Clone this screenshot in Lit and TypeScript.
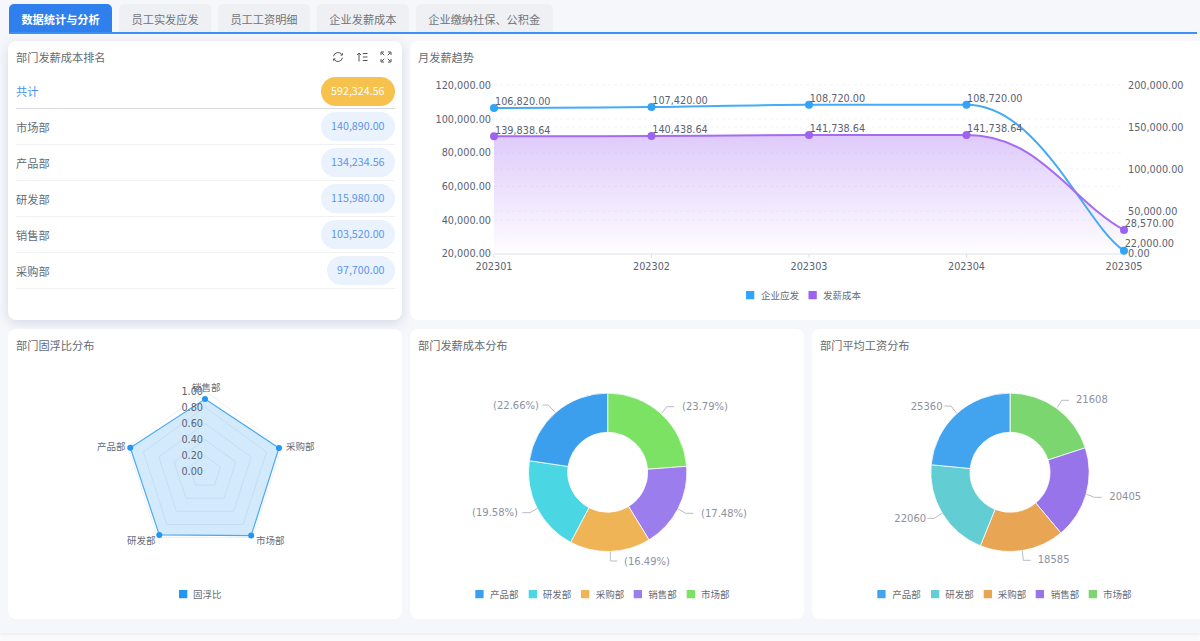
import { LitElement, html, css, svg } from "lit";
import { customElement } from "lit/decorators.js";

type Pt = [number, number];
interface Slice { value: number; color: string; label: string; line: Pt[]; tx: number; ty: number; anchor?: string; }
interface LegendItem { name: string; color: string; sx: number; tx: number; }

const arc = (cx: number, cy: number, r0: number, r1: number, a0: number, a1: number) => {
  const p = (r: number, a: number) => `${(cx + r * Math.sin(a)).toFixed(2)} ${(cy - r * Math.cos(a)).toFixed(2)}`;
  const large = a1 - a0 > Math.PI ? 1 : 0;
  return `M${p(r1, a0)}A${r1} ${r1} 0 ${large} 1 ${p(r1, a1)}L${p(r0, a1)}A${r0} ${r0} 0 ${large} 0 ${p(r0, a0)}Z`;
};

const legend = (items: LegendItem[], y: number) =>
  items.map(
    (i) => svg`<rect x=${i.sx} y=${y - 4} width="8.3" height="8.3" rx="0.5" fill=${i.color}></rect>
      <text class="cjk" x=${i.tx} y=${y}>${i.name}</text>`
  );

const donut = (cx: number, cy: number, slices: Slice[]) => {
  const total = slices.reduce((s, d) => s + d.value, 0);
  let a = 0;
  return slices.map((d) => {
    const next = a + (d.value / total) * Math.PI * 2;
    const path = arc(cx, cy, 40, 79.2, a, next);
    a = next;
    return svg`<path d=${path} fill=${d.color} stroke="#fff" stroke-width="0.8"></path>
      <polyline points=${d.line.map((p) => p.join(",")).join(" ")} fill="none" stroke="#b9bcc6" stroke-width="1"></polyline>
      <text class="pie" x=${d.tx} y=${d.ty}>${d.label}</text>`;
  });
};

const pieA: Slice[] = [
  { value: 23.79, color: "#7be264", label: "(23.79%)", line: [[661.7, 413.3], [666.7, 406.7], [674.3, 406.7]], tx: 682, ty: 406.7 },
  { value: 17.48, color: "#9b7ded", label: "(17.48%)", line: [[678.3, 509], [685.7, 513.3], [693.3, 513.3]], tx: 701, ty: 513.3 },
  { value: 16.49, color: "#eeb455", label: "(16.49%)", line: [[610.3, 551.7], [610.3, 561], [617.3, 561]], tx: 624, ty: 561 },
  { value: 19.58, color: "#4ad6e2", label: "(19.58%)", line: [[537.3, 508.3], [530, 512.7], [522.3, 512.7]], tx: 472, ty: 512.7 },
  { value: 22.66, color: "#3c9fee", label: "(22.66%)", line: [[555, 412.3], [548.3, 405], [542.7, 405]], tx: 493, ty: 405 },
];
const pieB: Slice[] = [
  { value: 21608, color: "#7cd670", label: "21608", line: [[1057.3, 407.7], [1061.7, 400.3], [1069, 400.3]], tx: 1076, ty: 399.7 },
  { value: 20405, color: "#9774ea", label: "20405", line: [[1086.7, 494.3], [1094.3, 497.3], [1101.7, 497.3]], tx: 1109.3, ty: 496 },
  { value: 18585, color: "#e8a553", label: "18585", line: [[1022.3, 551], [1023.3, 560.3], [1030.7, 560.3]], tx: 1037.7, ty: 559.3 },
  { value: 22060, color: "#62cdd2", label: "22060", line: [[941.7, 513.3], [934.3, 518.3], [927.3, 518.3]], tx: 894.3, ty: 518 },
  { value: 25360, color: "#42a3ef", label: "25360", line: [[956.7, 413.3], [951, 406], [944.3, 406]], tx: 910.7, ty: 406 },
];

const legendA: LegendItem[] = [
  { name: "产品部", color: "#3c9fee", sx: 475.3, tx: 490 },
  { name: "研发部", color: "#4ad6e2", sx: 528.7, tx: 542.7 },
  { name: "采购部", color: "#eeb455", sx: 581, tx: 595.7 },
  { name: "销售部", color: "#9b7ded", sx: 633.7, tx: 648.3 },
  { name: "市场部", color: "#7be264", sx: 686.7, tx: 701 },
];
const legendB: LegendItem[] = [
  { name: "产品部", color: "#42a3ef", sx: 877.3, tx: 892.3 },
  { name: "研发部", color: "#62cdd2", sx: 931, tx: 945.3 },
  { name: "采购部", color: "#e8a553", sx: 983.7, tx: 997.7 },
  { name: "销售部", color: "#9774ea", sx: 1035.7, tx: 1050.7 },
  { name: "市场部", color: "#7cd670", sx: 1088.7, tx: 1103 },
];

const rows = [
  ["市场部", "140,890.00"],
  ["产品部", "134,234.56"],
  ["研发部", "115,980.00"],
  ["销售部", "103,520.00"],
  ["采购部", "97,700.00"],
];
const tabs = ["员工实发应发", "员工工资明细", "企业发薪成本", "企业缴纳社保、公积金"];

const xs = [494, 651.5, 809, 966.5, 1124];
const blue: Pt[] = [[494, 108], [651.5, 107], [809, 104.8], [966.5, 104.8], [1124, 250.7]];
const purple: Pt[] = [[494, 136.3], [651.5, 136], [809, 135], [966.5, 135], [1124, 230]];
const blueLine = "M494 108C546 108 599 107.5 651.5 107C704 106.5 756 104.8 809 104.8C861 104.8 914 104.8 966.5 104.8C1040 104.8 1085 225 1124 250.7";
const purpleLine = "M494 136.3C546 136.3 599 136.2 651.5 136C704 135.8 756 135 809 135C861 135 914 135 966.5 135C1040 135 1070 200 1124 230";
const dataLabels: [number, number, string][] = [
  [495, 101.7, "106,820.00"], [652.3, 100.5, "107,420.00"], [809.7, 98.3, "108,720.00"], [967, 98.3, "108,720.00"], [1124.7, 243.7, "22,000.00"],
  [495, 130, "139,838.64"], [652.3, 129.5, "140,438.64"], [809.7, 128.5, "141,738.64"], [967, 128.5, "141,738.64"], [1124.7, 223.5, "28,570.00"],
];

const RC: Pt = [205, 472];
const radarPt = (i: number, v: number): Pt => {
  const a = (i * 2 * Math.PI) / 5;
  return [RC[0] + 81 * v * Math.sin(a), RC[1] - 81 * v * Math.cos(a)];
};
const radarVals = [0.9, 0.96, 0.97, 0.96, 0.97];
const radarPts = radarVals.map((v, i) => radarPt(i, v));
const ring = (v: number) => [0, 1, 2, 3, 4].map((i) => radarPt(i, v).map((n) => n.toFixed(1)).join(",")).join(" ");

@customElement("app-root")
export class AppRoot extends LitElement {
  static styles = css`
    :host { display: block; width: 1200px; height: 641px; overflow: hidden; background: #fafafc; font-family: "Noto Sans CJK SC", "Noto Sans", sans-serif; }
    .page { height: 633px; box-sizing: border-box; padding-top: 4px; background: #f5f7fb; box-shadow: 0 1px 3px rgba(40, 50, 90, 0.08); overflow: hidden; }
    .tabs { display: flex; gap: 7px; margin: 0 3px 0 9px; height: 30px; box-sizing: border-box; border-bottom: 2px solid #3d90f5; }
    .tab { padding: 0 12.4px; height: 28px; line-height: 30px; font-size: 11.2px; color: #70747a; background: #eef0f3; border-radius: 5px 5px 0 0; white-space: nowrap; }
    .tab.active { background: #2f80ed; color: #fff; font-weight: 700; }
    .grid { display: grid; grid-template-columns: 394px 394px 394px; grid-template-rows: 279px 290px; gap: 9px 8px; margin: 7px 0 0 8px; width: 1206px; }
    .card { background: #fff; border-radius: 8px; overflow: hidden; min-width: 0; }
    .wide { grid-column: 2 / 4; }
    .raised { box-shadow: 0 3px 12px rgba(60, 70, 120, 0.16); }
    .head { height: 32px; box-sizing: border-box; padding: 0 8px 1px; display: flex; align-items: center; justify-content: space-between; font-size: 11.2px; color: #666a72; }
    .tools { display: flex; gap: 12px; padding-right: 2px; }
    .tools svg { width: 12px; height: 12px; display: block; fill: none; stroke: #555; stroke-width: 1; }
    .list { margin: 3.5px 7.5px 0 8px; }
    .row { display: flex; justify-content: space-between; align-items: center; height: 36px; box-sizing: border-box; border-bottom: 1px solid #f0f1f4; font-size: 11.2px; color: #666a72; padding: 3px 0; }
    .row.total { height: 32.5px; border-bottom: 1.5px solid #d8dae0; color: #4a90f0; padding: 0 0 2px; }
    .pill { height: 29px; line-height: 28px; padding: 0 10px; border-radius: 15px; background: #eaf2fe; color: #5b95ef; font-size: 10.7px; }
    .total .pill { background: #f6c14c; color: #fff; }
    .chart { display: block; }
    text { font-family: "DejaVu Sans", sans-serif; font-size: 9.7px; fill: #5a6272; dominant-baseline: central; }
    text.cjk { font-family: "Noto Sans CJK SC", sans-serif; fill: #666b78; font-size: 9.5px; }
    text.pie { font-size: 10px; fill: #8d919f; }
    text.end { text-anchor: end; }
    text.mid { text-anchor: middle; }
  `;

  render() {
    return html`<div class="page">
      <div class="tabs">
        <div class="tab active">数据统计与分析</div>
        ${tabs.map((t) => html`<div class="tab">${t}</div>`)}
      </div>
      <div class="grid">
        <section class="card raised">
          <div class="head">
            <span>部门发薪成本排名</span>
            <span class="tools">
              <svg viewBox="0 0 12 12"><path d="M1.5 5.2A4.6 4.6 0 0 1 9.9 3.6M10.5 6.8A4.6 4.6 0 0 1 2.1 8.4"></path><path d="M10.4 2.2V4.1H8.5M1.6 9.8V7.9H3.5"></path></svg>
              <svg viewBox="0 0 12 12"><path d="M3 10.5V2M1 4L3 2 5 4M6.8 2.5H11.5M6.8 6H11.5M6.8 9.5H11.5"></path></svg>
              <svg viewBox="0 0 12 12"><path d="M1 4V1H4M8 1H11V4M1 8V11H4M11 8V11H8M1.5 1.5L4.2 4.2M10.5 1.5L7.8 4.2M1.5 10.5L4.2 7.8M10.5 10.5L7.8 7.8"></path></svg>
            </span>
          </div>
          <div class="list">
            <div class="row total"><span>共计</span><span class="pill">592,324.56</span></div>
            ${rows.map(([n, v]) => html`<div class="row"><span>${n}</span><span class="pill">${v}</span></div>`)}
          </div>
        </section>

        <section class="card wide">
          <div class="head"><span>月发薪趋势</span></div>
          <svg class="chart" width="796" height="247" viewBox="410 73 796 247">
            <defs>
              <linearGradient id="area" x1="0" y1="0" x2="0" y2="1">
                <stop offset="0" stop-color="#a56cf2" stop-opacity="0.36"></stop>
                <stop offset="1" stop-color="#a56cf2" stop-opacity="0.01"></stop>
              </linearGradient>
            </defs>
            ${[85, 119, 153, 186.5, 220, 127, 169, 211].map(
              (y) => svg`<line x1="494" x2="1124" y1=${y} y2=${y} stroke="#f4f5f8" stroke-dasharray="3 3"></line>`
            )}
            <path d="${purpleLine}L1124 254L494 254Z" fill="url(#area)"></path>
            <line x1="494" x2="1124" y1="254" y2="254" stroke="#dfe2e8" stroke-width="1"></line>
            ${xs.map((x) => svg`<line x1=${x} x2=${x} y1="254" y2="258" stroke="#dfe2e8"></line>`)}
            <path d=${blueLine} fill="none" stroke="#45abf6" stroke-width="2"></path>
            <path d=${purpleLine} fill="none" stroke="#a56cf2" stroke-width="2"></path>
            ${blue.map((p) => svg`<circle cx=${p[0]} cy=${p[1]} r="4" fill="#2fa4f9"></circle>`)}
            ${purple.map((p) => svg`<circle cx=${p[0]} cy=${p[1]} r="4" fill="#9d63f0"></circle>`)}
            ${[[85, "120,000.00"], [119, "100,000.00"], [152.7, "80,000.00"], [186, "60,000.00"], [220, "40,000.00"], [253.5, "20,000.00"]].map(
              ([y, t]) => svg`<text class="end" x="491" y=${y}>${t}</text>`
            )}
            ${[[85, "200,000.00"], [127, "150,000.00"], [169, "100,000.00"], [211, "50,000.00"], [253, "0.00"]].map(
              ([y, t]) => svg`<text x="1128" y=${y}>${t}</text>`
            )}
            ${["202301", "202302", "202303", "202304", "202305"].map(
              (t, i) => svg`<text class="mid" x=${xs[i]} y="266">${t}</text>`
            )}
            ${dataLabels.map(([x, y, t]) => svg`<text x=${x} y=${y}>${t}</text>`)}
            <rect x="746" y="291" width="8.3" height="8.3" rx="0.5" fill="#2fa4f9"></rect>
            <text class="cjk" x="761" y="295">企业应发</text>
            <rect x="808.5" y="291" width="8.3" height="8.3" rx="0.5" fill="#9d63f0"></rect>
            <text class="cjk" x="823" y="295">发薪成本</text>
          </svg>
        </section>

        <section class="card">
          <div class="head"><span>部门固浮比分布</span></div>
          <svg class="chart" width="394" height="258" viewBox="8 361 394 258">
            ${[1, 0.8, 0.6, 0.4, 0.2].map((v) => svg`<polygon points=${ring(v)} fill="none" stroke="#eef0f3"></polygon>`)}
            <polygon points=${radarPts.map((p) => p.join(",")).join(" ")} fill="#1e96f0" fill-opacity="0.2" stroke="#4aa9f5" stroke-width="1.2"></polygon>
            ${radarPts.map((p) => svg`<circle cx=${p[0]} cy=${p[1]} r="3" fill="#2196f3"></circle>`)}
            ${[[391, "1.00"], [407, "0.80"], [423, "0.60"], [439, "0.40"], [455, "0.20"], [471.7, "0.00"]].map(
              ([y, t]) => svg`<text class="end" x="203" y=${y}>${t}</text>`
            )}
            <text class="cjk" x="192" y="387">销售部</text>
            <text class="cjk" x="286" y="445.5">采购部</text>
            <text class="cjk" x="256" y="539.5">市场部</text>
            <text class="cjk" x="127" y="539.5">研发部</text>
            <text class="cjk" x="97" y="445.5">产品部</text>
            ${legend([{ name: "固浮比", color: "#2196f3", sx: 179, tx: 193 }], 594)}
          </svg>
        </section>

        <section class="card">
          <div class="head"><span>部门发薪成本分布</span></div>
          <svg class="chart" width="394" height="258" viewBox="410 361 394 258">
            ${donut(607.7, 472.3, pieA)}
            ${legend(legendA, 594)}
          </svg>
        </section>

        <section class="card">
          <div class="head"><span>部门平均工资分布</span></div>
          <svg class="chart" width="394" height="258" viewBox="812 361 394 258">
            ${donut(1010, 472.3, pieB)}
            ${legend(legendB, 594)}
          </svg>
        </section>
      </div>
    </div>`;
  }
}
